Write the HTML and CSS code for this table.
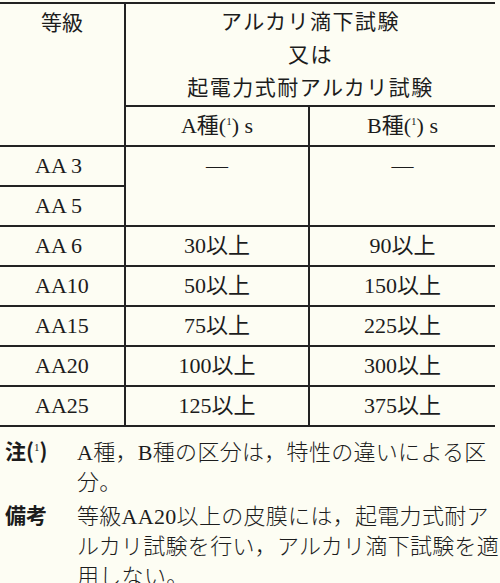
FILE: index.html
```html
<!DOCTYPE html>
<html lang="ja">
<head>
<meta charset="utf-8">
<link rel="stylesheet" href="styles.css">
</head>
<body>
<div class="page">
  <table class="grade">
    <colgroup>
      <col class="c1"><col class="c2"><col class="c3">
    </colgroup>
    <tr class="h1">
      <td class="grade-head" rowspan="2">等級</td>
      <td class="test-head" colspan="2">アルカリ滴下試験<br>又は<br>起電力式耐アルカリ試験</td>
    </tr>
    <tr class="h2">
      <td class="sub">A種(<span class="sup">1</span>) s</td>
      <td class="sub">B種(<span class="sup">1</span>) s</td>
    </tr>
    <tr class="row">
      <td class="name">AA 3</td>
      <td class="val top" rowspan="2">—</td>
      <td class="val top" rowspan="2">—</td>
    </tr>
    <tr class="row"><td class="name">AA 5</td></tr>
    <tr class="row"><td class="name">AA 6</td><td class="val">30以上</td><td class="val">90以上</td></tr>
    <tr class="row"><td class="name">AA10</td><td class="val">50以上</td><td class="val">150以上</td></tr>
    <tr class="row"><td class="name">AA15</td><td class="val">75以上</td><td class="val">225以上</td></tr>
    <tr class="row"><td class="name">AA20</td><td class="val">100以上</td><td class="val">300以上</td></tr>
    <tr class="row"><td class="name">AA25</td><td class="val">125以上</td><td class="val">375以上</td></tr>
  </table>
  <div class="notes">
    <div class="note">
      <div class="label">注(<span class="sup">1</span>)</div>
      <div class="text"><span class="lat">A</span>種，<span class="lat">B</span>種の区分は，特性の違いによる区<br>分。</div>
    </div>
    <div class="note">
      <div class="label">備考</div>
      <div class="text">等級<span class="lat">AA20</span>以上の皮膜には，起電力式耐ア<br>ルカリ試験を行い，アルカリ滴下試験を適<br>用しない。</div>
    </div>
  </div>
</div>
</body>
</html>
```
FILE: styles.css
```css
html, body {
  margin: 0;
  padding: 0;
  background: #fdfdf3;
}
.page {
  width: 500px;
  height: 583px;
  overflow: hidden;
  padding-top: 2px;
  box-sizing: border-box;
  color: #1c1c1c;
  font-family: "Liberation Serif", "Noto Sans CJK JP", serif;
  font-weight: 400;
}
.grade {
  border-collapse: collapse;
  width: 495px;
  table-layout: fixed;
  font-size: 22px;
}
.c1 { width: 125px; }
.c2 { width: 184px; }
.c3 { width: 186px; }
.grade td {
  border: 2px solid #222;
  padding: 0;
  text-align: center;
  line-height: 38px;
}
.grade tr td:first-child { border-left: none; }
.grade tr td:last-child { border-right: none; }
.grade .h1 td.test-head {
  border-right: none;
}
.grade-head {
  vertical-align: top;
  font-size: 21px;
  line-height: 38px !important;
}
.test-head {
  font-size: 21px;
  line-height: 33px !important;
  padding-top: 2px !important;
  height: 97px;
  letter-spacing: 1.5px;
}
.h2 td { height: 38px; }
.sub { font-size: 22px; }
.sup {
  font-size: 11px;
  vertical-align: 8px;
  line-height: 0;
}
.row td { height: 38px; }
.name {
  text-align: left !important;
  padding-left: 35px !important;
}
.val.top {
  vertical-align: top;
}
.notes {
  margin-top: 8px;
  font-size: 22px;
}
.note {
  display: flex;
  margin-bottom: 4px;
}
.label {
  width: 72px;
  padding-left: 5px;
  flex: none;
  font-family: "Noto Sans CJK JP", sans-serif;
  font-weight: 700;
  font-size: 21px;
  line-height: 30px;
}
.label .sup {
  font-family: "Liberation Serif", serif;
  font-weight: 400;
}
.text {
  flex: none;
  width: 420px;
  white-space: nowrap;
  font-family: "Noto Sans CJK JP", sans-serif;
  font-weight: 300;
  line-height: 30px;
  letter-spacing: 0.3px;
}
.lat {
  font-family: "Liberation Serif", serif;
  font-weight: 400;
  line-height: 0;
}
```
